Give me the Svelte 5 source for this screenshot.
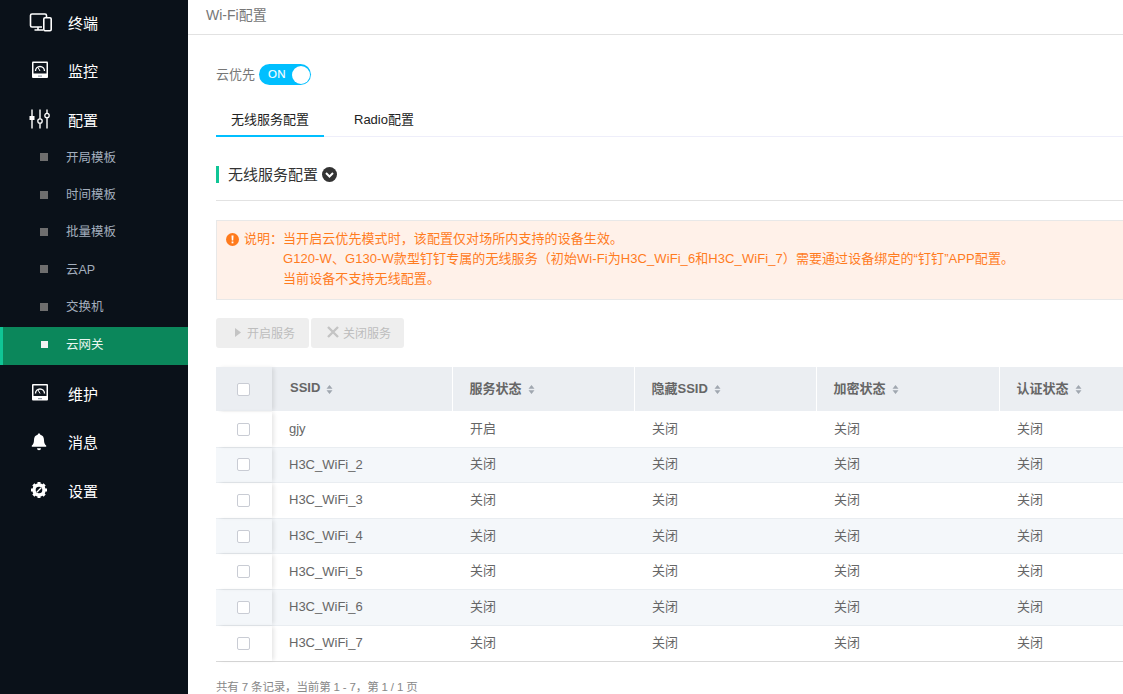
<script>
  const subs = ['开局模板', '时间模板', '批量模板', '云AP', '交换机', '云网关'];
  const cols = ['SSID', '服务状态', '隐藏SSID', '加密状态', '认证状态'];
  const rows = [
    ['gjy', '开启'],
    ['H3C_WiFi_2', '关闭'],
    ['H3C_WiFi_3', '关闭'],
    ['H3C_WiFi_4', '关闭'],
    ['H3C_WiFi_5', '关闭'],
    ['H3C_WiFi_6', '关闭'],
    ['H3C_WiFi_7', '关闭']
  ];
</script>

<div class="page">
  <aside class="side">
    <div class="nav first">
      <svg class="ico" viewBox="0 1 24 20" width="24" height="20">
        <path d="M13 15H3a1.500 1.500 0 0 1-1.500-1.500v-10A1.500 1.500 0 0 1 3 2h13a1.500 1.500 0 0 1 1.500 1.500V5" fill="none" stroke="#fff" stroke-width="1.600" />
        <path d="M9 15v2.500M5.500 18H14" fill="none" stroke="#fff" stroke-width="1.600" />
        <rect x="14.800" y="5.800" width="7.400" height="13" rx="1.200" fill="none" stroke="#fff" stroke-width="1.600" />
      </svg>
      <span class="lift">终端</span>
    </div>
    <div class="nav">
      <svg class="ico" viewBox="0 0 24 20" width="24" height="20">
        <rect x="3" y="1.500" width="16" height="16.500" rx="1" fill="#fff" />
        <rect x="4.500" y="3" width="13" height="10.500" fill="#10171f" />
        <path d="M6.500 11a4.500 4.500 0 0 1 9 0" fill="none" stroke="#fff" stroke-width="1.300" />
        <path d="M11 11l-2-3.500" stroke="#fff" stroke-width="1" />
        <path d="M9 15.500h4v1.200H9z" fill="#8f99a5" />
      </svg>
      <span>监控</span>
    </div>
    <div class="nav cfg">
      <svg class="ico" viewBox="0 0 24 20" width="24" height="20">
        <path d="M3 .5v19M11 .5v19M18 .5v19" stroke="#fff" stroke-width="1.400" fill="none" />
        <rect x="0.500" y="7" width="5" height="4" fill="#fff" />
        <circle cx="11" cy="12" r="2.200" fill="#0a1119" stroke="#fff" stroke-width="1.300" />
        <circle cx="18" cy="6.500" r="2.200" fill="#0a1119" stroke="#fff" stroke-width="1.300" />
      </svg>
      <span>配置</span>
    </div>
    <ul class="subs">
      {#each subs as s, i}
        <li class:active={i === 5}><i class="dot"></i><span class="lift">{s}</span></li>
      {/each}
    </ul>
    <div class="nav after">
      <svg class="ico" viewBox="0 0 24 20" width="24" height="20">
        <rect x="3" y="1" width="16" height="16.500" rx="1" fill="#fff" />
        <rect x="4.500" y="2.500" width="13" height="10.500" fill="#10171f" />
        <path d="M6.500 10.500a4.500 4.500 0 0 1 9 0" fill="none" stroke="#fff" stroke-width="1.300" />
        <path d="M11 10.500l-2-3.500" stroke="#fff" stroke-width="1" />
        <path d="M9 15h4v1.200H9z" fill="#8f99a5" />
      </svg>
      <span>维护</span>
    </div>
    <div class="nav">
      <svg class="ico" viewBox="0 0 24 20" width="24" height="20">
        <path d="M10 1.500c.8 0 1.200.5 1.300 1.200 2.600.6 3.700 2.600 3.700 5.300 0 3 .9 4.400 2.200 5.600v1.200H2.800v-1.200C4.100 12.400 5 11 5 8c0-2.700 1.100-4.700 3.700-5.300.1-.7.5-1.200 1.300-1.200z" fill="#fff" />
        <path d="M8 16.300h4a2 2 0 0 1-4 0z" fill="#fff" />
      </svg>
      <span>消息</span>
    </div>
    <div class="nav">
      <svg class="ico" viewBox="0 0 24 20" width="24" height="20">
        <circle cx="10" cy="10" r="5" fill="none" stroke="#fff" stroke-width="3.400" />
        <path d="M10 2v16M2 10h16M4.340 4.340l11.320 11.320M15.660 4.340L4.340 15.660" stroke="#fff" stroke-width="3" stroke-dasharray="2.500 11 2.500" fill="none" />
        <path d="M7.800 12.200l4.400-4.400" stroke="#fff" stroke-width="1.300" />
      </svg>
      <span>设置</span>
    </div>
  </aside>

  <main class="main">
    <header class="title">Wi-Fi配置</header>
    <div class="body">
      <div class="cloud">
        <span class="lift">云优先</span>
        <div class="switch"><b>ON</b><i></i></div>
      </div>

      <div class="tabs">
        <div class="tab on">无线服务配置</div>
        <div class="tab">Radio配置</div>
      </div>

      <div class="section">
        <span class="lift">无线服务配置</span>
        <svg viewBox="0 0 15 15" width="15" height="15">
          <circle cx="7.500" cy="7.500" r="7.500" fill="#333" />
          <path d="M4 6l3.500 3.500L11 6" fill="none" stroke="#fff" stroke-width="2" />
        </svg>
      </div>

      <div class="alert">
        <svg viewBox="0 0 13 13" width="13" height="13">
          <circle cx="6.500" cy="6.500" r="6.500" fill="#ff7a1c" />
          <path d="M5.500 2.500h2l-.3 5H5.800z" fill="#fff" />
          <rect x="5.600" y="8.500" width="1.800" height="1.800" fill="#fff" />
        </svg>
        <span class="lbl">说明：</span>
        <div class="msg">
          <p>当开启云优先模式时，该配置仅对场所内支持的设备生效。</p>
          <p>G120-W、G130-W款型钉钉专属的无线服务（初始Wi-Fi为H3C_WiFi_6和H3C_WiFi_7）需要通过设备绑定的“钉钉”APP配置。</p>
          <p>当前设备不支持无线配置。</p>
        </div>
      </div>

      <div class="btns">
        <button type="button" disabled>
          <svg viewBox="0 0 6 9" width="6" height="9"><path d="M0 0l6 4.500-6 4.500z" fill="#c4c4c4" /></svg>
          开启服务
        </button>
        <button type="button" class="second" disabled>
          <svg viewBox="0 0 12 12" width="12" height="12"><path d="M1 1l10 10M11 1L1 11" stroke="#c4c4c4" stroke-width="2.400" /></svg>
          关闭服务
        </button>
      </div>

      <div class="table">
        <div class="row head">
          <div class="cell chk"><i class="box"></i></div>
          {#each cols as c}
            <div class="cell">
              <span>{c}</span>
              <svg viewBox="0 0 7 9" width="7" height="9">
                <path d="M3.500 0l3 3.800h-6zM3.500 9L.5 5.200h6z" fill="#a0a7b0" />
              </svg>
            </div>
          {/each}
        </div>
        {#each rows as r, i}
          <div class="row" class:alt={i % 2 === 1}>
            <div class="cell chk"><i class="box"></i></div>
            <div class="cell name">{r[0]}</div>
            <div class="cell">{r[1]}</div>
            <div class="cell">关闭</div>
            <div class="cell">关闭</div>
            <div class="cell">关闭</div>
          </div>
        {/each}
      </div>

      <div class="foot">共有 7 条记录，当前第 1 - 7，第 1 / 1 页</div>
    </div>
  </main>
</div>

<style>
  :global(body) {
    margin: 0;
    background: #fff;
    font-family: "Liberation Sans", "Noto Sans CJK SC", sans-serif;
  }
  .page {
    display: flex;
    width: 1123px;
    height: 694px;
    overflow: hidden;
  }
  .side {
    flex: 0 0 188px;
    background: #0a1119;
    color: #fff;
  }
  .nav {
    display: flex;
    align-items: center;
    box-sizing: border-box;
    height: 48.500px;
    padding-left: 29px;
    font-size: 15px;
  }
  .nav.first {
    height: 46px;
  }
  .nav.cfg {
    height: 44px;
    padding-top: 5px;
  }
  .nav.after {
    margin-top: 4px;
  }
  .ico {
    flex: none;
    margin-right: 15px;
  }
  .subs {
    list-style: none;
    margin: 0;
    padding: 0;
  }
  .subs li {
    display: flex;
    align-items: center;
    box-sizing: border-box;
    height: 37.400px;
    padding-left: 40px;
    font-size: 12.500px;
    color: #a3aebd;
  }
  .subs li.active {
    background: #0b875b;
    box-shadow: inset 3px 0 0 #10c596;
    color: #e8f5ef;
    height: 38px;
    margin-top: 1.500px;
    padding-bottom: 3.600px;
  }
  .dot {
    flex: none;
    width: 8px;
    height: 8px;
    margin-right: 18px;
    background: #6e6e6e;
  }
  .active .dot {
    width: 7px;
    height: 7px;
    margin-left: 1px;
    background: #f2f2f2;
  }
  .main {
    flex: 1;
    min-width: 0;
  }
  .title {
    height: 34px;
    line-height: 30px;
    padding-left: 18px;
    font-size: 14px;
    color: #777;
    border-bottom: 1px solid #e2e2e2;
  }
  .body {
    width: 1000px;
    padding: 29px 0 0 28px;
  }
  .lift {
    padding-bottom: 2px;
  }
  .cloud {
    display: flex;
    align-items: center;
    gap: 4px;
    height: 21px;
    font-size: 13px;
    color: #777;
  }
  .switch {
    display: flex;
    align-items: center;
    justify-content: space-between;
    box-sizing: border-box;
    width: 52px;
    height: 21px;
    padding: 0 1px 0 9px;
    border-radius: 11px;
    background: #00bfff;
    color: #fff;
  }
  .switch b {
    font-size: 11.500px;
    font-weight: 400;
    letter-spacing: 0.3px;
    -webkit-text-stroke: 0.1px #fff;
    padding-bottom: 1px;
  }
  .switch i {
    width: 18px;
    height: 18px;
    border-radius: 50%;
    background: #fff;
  }
  .tabs {
    display: flex;
    box-sizing: border-box;
    margin-top: 16px;
    height: 36px;
    border-bottom: 1px solid #eeeefa;
    font-size: 13px;
    color: #222;
  }
  .tab {
    box-sizing: border-box;
    height: 36px;
    line-height: 38px;
    padding: 0 15px;
    margin-right: 15px;
  }
  .tab.on {
    width: 108px;
    border-bottom: 2px solid #00bfff;
  }
  .section {
    display: flex;
    align-items: center;
    gap: 4px;
    margin-top: 29px;
    height: 17px;
    padding-left: 9px;
    border-left: 3px solid #10c596;
    font-size: 15px;
    color: #333;
  }
  .alert {
    display: flex;
    align-items: flex-start;
    box-sizing: border-box;
    margin-top: 37px;
    width: 1000px;
    height: 80px;
    padding: 8px 0 0 9px;
    background: #fff1e9;
    border: 1px solid #e8e8e8;
    font-size: 13px;
    line-height: 20px;
    color: #ff7c1f;
    position: relative;
  }
  .alert::before {
    content: "";
    position: absolute;
    left: -1px;
    right: 0;
    top: -21px;
    border-top: 1px solid #e2e2e2;
  }
  .alert svg {
    flex: none;
    margin-top: 4px;
  }
  .lbl {
    flex: none;
    width: 39px;
    margin-left: 5px;
  }
  .msg p {
    margin: 0;
    white-space: nowrap;
    letter-spacing: 0.08px;
  }
  .btns {
    display: flex;
    gap: 2px;
    margin-top: 18px;
  }
  .btns button {
    display: flex;
    align-items: center;
    box-sizing: border-box;
    gap: 6px;
    width: 93px;
    height: 30px;
    padding: 0 0 2px 19px;
    border: 0;
    border-radius: 3px;
    background: #eee;
    color: #bdbdbd;
    font: inherit;
    font-size: 12px;
  }
  .btns button.second {
    gap: 4px;
    padding-left: 16px;
  }
  .table {
    margin-top: 19px;
    width: 1000px;
    border-bottom: 1px solid #d9d9d9;
  }
  .row {
    display: grid;
    grid-template-columns: 56px 180px 182px 182px 183px 1fr;
    height: 35.600px;
    box-sizing: border-box;
    border-bottom: 1px solid #e9edf1;
    font-size: 13px;
    color: #666;
  }
  .row:last-child {
    border-bottom: 0;
  }
  .row.alt {
    background: #f4f7fa;
  }
  .row.head {
    height: 44px;
    margin-bottom: 1px;
    border-bottom: 0;
    background: #ebeef2;
    font-weight: 700;
  }
  .cell {
    display: flex;
    align-items: center;
    gap: 6px;
    padding-left: 18px;
    padding-bottom: 4px;
  }
  .cell.name {
    padding-left: 17px;
    padding-bottom: 1px;
  }
  .head .cell {
    padding-bottom: 0;
  }
  .head .cell span {
    padding-bottom: 3px;
  }
  .head .cell + .cell + .cell {
    border-left: 1.500px solid #fff;
    padding-left: 16.500px;
  }
  .cell.chk,
  .head .cell.chk {
    justify-content: center;
    padding: 0;
    position: relative;
    box-shadow: 3px 0 4px -1px rgba(0, 0, 0, 0.1);
  }
  .box {
    box-sizing: border-box;
    width: 13px;
    height: 13px;
    margin-right: 1px;
    background: #fff;
    border: 1px solid #c9ccd4;
    border-radius: 2px;
  }
  .foot {
    margin-top: 18px;
    font-size: 11.500px;
    letter-spacing: -0.15px;
    line-height: 14px;
    color: #888;
    white-space: nowrap;
  }
</style>
